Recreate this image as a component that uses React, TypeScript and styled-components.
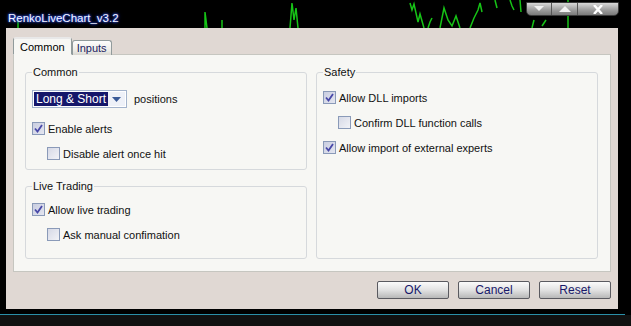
import React from "react";
import styled, { createGlobalStyle } from "styled-components";

const GlobalStyle = createGlobalStyle`
  html, body {
    margin: 0;
    padding: 0;
    background: #000;
  }
  body {
    font-family: "Liberation Sans", Arial, sans-serif;
  }
`;

const Screen = styled.div`
  width: 631px;
  height: 326px;
  background: #000;
  display: flex;
  flex-direction: column;
  overflow: hidden;
`;

const TitleBar = styled.div`
  position: relative;
  height: 28px;
  display: flex;
  align-items: flex-start;
  justify-content: space-between;
  padding: 0 8px 0 8px;
  box-sizing: border-box;
  width: 625px;
`;

const ChartLines = styled.svg`
  position: absolute;
  left: 0;
  top: 0;
  width: 625px;
  height: 28px;
`;

const Title = styled.div`
  position: relative;
  margin-top: 12px;
  font-family: "Liberation Sans", Arial, sans-serif;
  font-size: 11.5px;
  color: #f4f6ff;
  text-shadow: 0 0 2px #3a5cff, 0 0 3px #2040d0, 0 0 4px #203080;
`;

const Controls = styled.div`
  position: relative;
  margin-top: 2px;
  margin-right: -2px;
  display: flex;
  height: 12px;
  border: 1px solid #3a3a3a;
  border-radius: 0 0 5px 5px;
  background: linear-gradient(#d8d8d8, #9a9a9a 60%, #7a7a7a);
  overflow: hidden;
`;

const CtrlButton = styled.div<{ $w: number }>`
  width: ${(p) => p.$w}px;
  display: flex;
  align-items: center;
  justify-content: center;
  border-left: 1px solid #555;
  &:first-child {
    border-left: none;
  }
`;

const FrameRow = styled.div`
  display: flex;
  padding-left: 6px;
`;

const Face = styled.div`
  width: 612px;
  height: 281px;
  background: #e0d8d3;
  padding: 9px 7px 9px 7px;
  box-sizing: border-box;
  display: flex;
  flex-direction: column;
`;

const TabRow = styled.div`
  display: flex;
  align-items: flex-end;
  height: 18px;
  position: relative;
  z-index: 1;
`;

const Tab = styled.div<{ $active?: boolean }>`
  font-size: 11px;
  color: ${(p) => (p.$active ? "#000" : "#1a1a60")};
  height: ${(p) => (p.$active ? "18px" : "15px")};
  padding: 0 ${(p) => (p.$active ? "6px" : "4px")};
  display: flex;
  align-items: center;
  box-sizing: border-box;
  border: 1px solid #919b9c;
  border-bottom: ${(p) => (p.$active ? "1px solid #f7f7f4" : "none")};
  border-radius: 3px 3px 0 0;
  background: ${(p) =>
    p.$active ? "#f7f7f4" : "linear-gradient(#fdfdfd, #ecebe6 70%, #d8d6d0)"};
  ${(p) => (p.$active ? "border-top: 2px solid #e8e8e8;" : "")}
`;

const Panel = styled.div`
  margin-top: -1px;
  height: 218px;
  border: 1px solid #c6c6c0;
  background: #f7f7f4;
  box-sizing: border-box;
  display: grid;
  grid-template-columns: 282px 282px;
  column-gap: 9px;
  padding: 11px 0 0 11px;
`;

const Column = styled.div`
  display: flex;
  flex-direction: column;
  gap: 10px;
`;

const Group = styled.fieldset<{ $h: number; $pt: number }>`
  margin: 0;
  height: ${(p) => p.$h}px;
  box-sizing: border-box;
  border: 1px solid #d6d9dc;
  border-radius: 3px;
  padding: ${(p) => p.$pt}px 0 0 6px;
  display: flex;
  flex-direction: column;
  gap: 12px;
`;

const Legend = styled.legend`
  font-size: 11px;
  line-height: 13px;
  color: #111;
  padding: 0 1px;
  margin-left: 0;
`;

const Row = styled.div<{ $indent?: boolean }>`
  display: flex;
  align-items: center;
  gap: 3px;
  height: 13px;
  margin-left: ${(p) => (p.$indent ? "15px" : "0")};
  font-size: 11px;
  color: #111;
`;

const Box = styled.div<{ $checked?: boolean }>`
  width: 13px;
  height: 13px;
  flex-shrink: 0;
  box-sizing: border-box;
  border: 1px solid #8a9ab8;
  background: ${(p) =>
    p.$checked
      ? "linear-gradient(135deg, #c9cde0, #e4e6f0)"
      : "linear-gradient(135deg, #d6d9e6, #f2f3f7)"};
  display: flex;
  align-items: center;
  justify-content: center;
`;

const SelectRow = styled.div`
  display: flex;
  align-items: center;
  gap: 7px;
  height: 18px;
  margin-top: -2px;
  margin-bottom: 2px;
  font-size: 11px;
  color: #111;
`;

const Select = styled.div`
  width: 95px;
  height: 18px;
  box-sizing: border-box;
  border: 1px solid #a3b3cc;
  background: #fff;
  display: flex;
  padding: 1px;
`;

const SelectValue = styled.div`
  flex: 1;
  background: #14166a;
  color: #fff;
  font-size: 12px;
  display: flex;
  align-items: center;
  padding-left: 2px;
`;

const SelectArrow = styled.div`
  width: 17px;
  display: flex;
  align-items: center;
  justify-content: center;
  background: #eef1f8;
`;

const ButtonRow = styled.div`
  display: flex;
  justify-content: flex-end;
  gap: 9px;
  margin-top: 9px;
`;

const Button = styled.div`
  width: 72px;
  height: 18px;
  box-sizing: border-box;
  border: 1px solid #5a5a60;
  border-radius: 2px;
  background: linear-gradient(#fbfbfb, #e2e2e2 50%, #b8b8b8);
  display: flex;
  align-items: center;
  justify-content: center;
  font-size: 12px;
  color: #18186a;
`;

const BottomEdge = styled.div`
  margin-top: 5px;
  width: 625px;
  height: 1px;
  background: #2a8fa8;
`;

const BottomShade = styled.div`
  flex: 1;
  background: #111;
`;

const Check = () => (
  <svg width="9" height="9" viewBox="0 0 9 9">
    <path d="M1 4.5 L3.5 7.5 L8 1" fill="none" stroke="#4848a8" strokeWidth="1.8" />
  </svg>
);

const CheckItem = ({
  label,
  checked,
  indent,
}: {
  label: string;
  checked?: boolean;
  indent?: boolean;
}) => (
  <Row $indent={indent}>
    <Box $checked={checked}>{checked && <Check />}</Box>
    {label}
  </Row>
);

const chartPaths = [
  "M18 28 L18 20",
  "M205 28 L205 12 L207 28",
  "M222 28 L222 20",
  "M290 28 L292 3 L294 20 L296 8 L298 28",
  "M410 3 L412 10 L414 4 L418 22 L420 14 L424 28",
  "M428 28 L430 22 L432 18",
  "M440 28 L444 8 L448 20 L452 26 L456 16 L460 28",
  "M470 28 L474 18 L478 10 L480 3 L482 12",
  "M495 0 L497 8",
  "M510 0 L512 6 L514 10",
  "M520 0 L521 12",
  "M532 28 L534 20",
  "M542 26 L546 20",
  "M568 0 L568 28",
];

const App = (): JSX.Element => (
  <>
    <GlobalStyle />
    <Screen>
      <TitleBar>
        <ChartLines viewBox="0 0 625 28">
          {chartPaths.map((d, i) => (
            <path key={i} d={d} stroke="#16c416" strokeWidth="1.5" fill="none" />
          ))}
        </ChartLines>
        <Title>RenkoLiveChart_v3.2</Title>
        <Controls>
          <CtrlButton $w={24}>
            <svg width="10" height="6" viewBox="0 0 10 6">
              <path d="M0 0 H10 L5 5 Z" fill="#f2f2f2" />
            </svg>
          </CtrlButton>
          <CtrlButton $w={25}>
            <svg width="12" height="6" viewBox="0 0 12 6">
              <path d="M0 6 L6 0 L12 6 Z" fill="#f2f2f2" />
            </svg>
          </CtrlButton>
          <CtrlButton $w={40}>
            <svg width="10" height="9" viewBox="0 0 10 9">
              <path d="M1 0 L9 9 M9 0 L1 9" stroke="#fff" strokeWidth="2.4" />
            </svg>
          </CtrlButton>
        </Controls>
      </TitleBar>
      <FrameRow>
        <Face>
          <TabRow>
            <Tab $active>Common</Tab>
            <Tab>Inputs</Tab>
          </TabRow>
          <Panel>
            <Column>
              <Group $h={104} $pt={13}>
                <Legend>Common</Legend>
                <SelectRow>
                  <Select>
                    <SelectValue>Long &amp; Short</SelectValue>
                    <SelectArrow>
                      <svg width="9" height="5" viewBox="0 0 9 5">
                        <path d="M0 0 H9 L4.5 5 Z" fill="#3a5a98" />
                      </svg>
                    </SelectArrow>
                  </Select>
                  positions
                </SelectRow>
                <CheckItem label="Enable alerts" checked />
                <CheckItem label="Disable alert once hit" indent />
              </Group>
              <Group $h={79} $pt={10}>
                <Legend>Live Trading</Legend>
                <CheckItem label="Allow live trading" checked />
                <CheckItem label="Ask manual confimation" indent />
              </Group>
            </Column>
            <Column>
              <Group $h={193} $pt={12}>
                <Legend>Safety</Legend>
                <CheckItem label="Allow DLL imports" checked />
                <CheckItem label="Confirm DLL function calls" indent />
                <CheckItem label="Allow import of external experts" checked />
              </Group>
            </Column>
          </Panel>
          <ButtonRow>
            <Button>OK</Button>
            <Button>Cancel</Button>
            <Button>Reset</Button>
          </ButtonRow>
        </Face>
      </FrameRow>
      <BottomEdge />
      <BottomShade />
    </Screen>
  </>
);

export default App;
